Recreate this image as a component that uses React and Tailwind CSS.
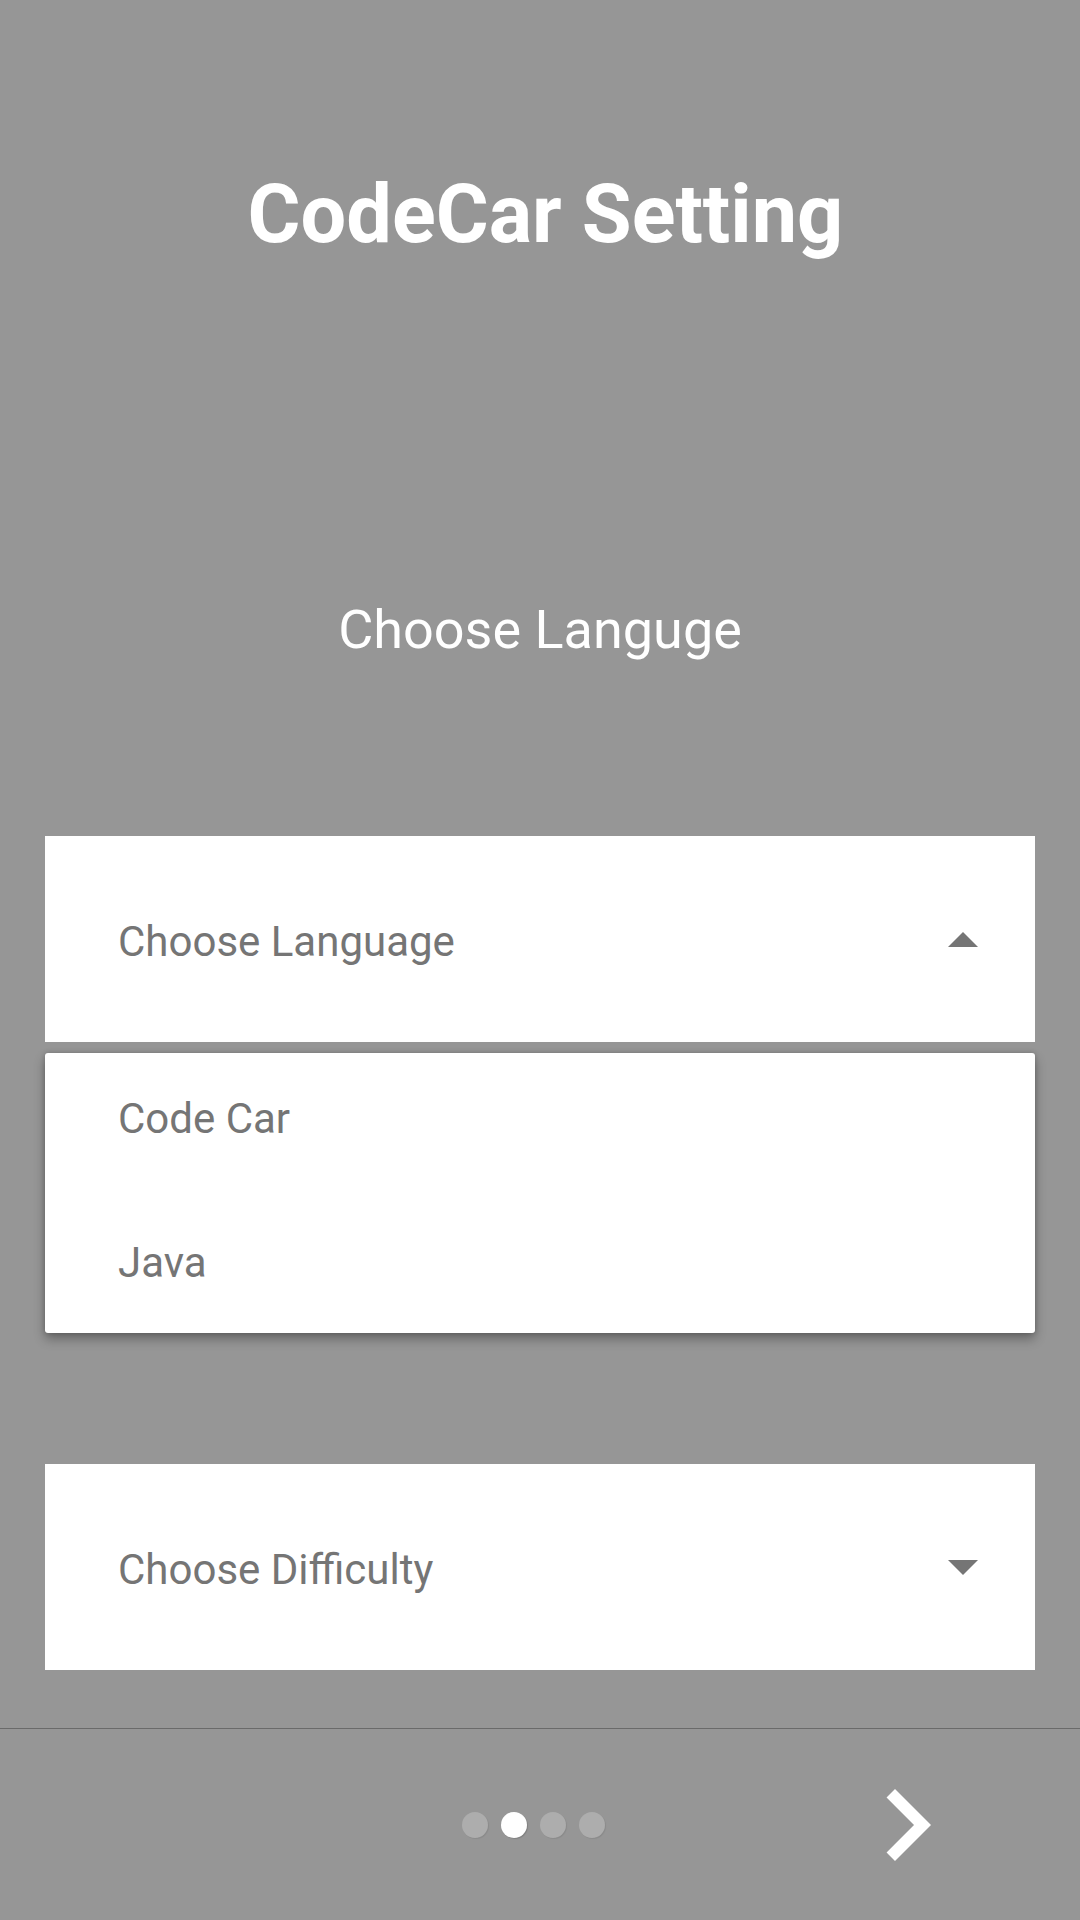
export default function App() {
  const dots = [false, true, false, false];

  return (
    <div className="w-[1080px] h-[1920px] bg-[#969696] flex flex-col font-['Roboto',sans-serif] overflow-hidden">
      {/* Header */}
      <h1 className="pt-[174px] pl-[11px] text-center text-white font-bold text-[81px] leading-none">
        CodeCar Setting
      </h1>
      <h2 className="mt-[348px] text-center text-white text-[54px] leading-none">
        Choose Languge
      </h2>

      {/* Language spinner (open) */}
      <div className="mt-[179px] mx-[45px] h-[206px] bg-white flex items-center pl-[73px] pr-[57px]">
        <span className="flex-1 pt-[5px] text-[42px] text-[#757575]">Choose Language</span>
        <svg width="30" height="15" viewBox="0 0 10 5">
          <path d="M0 5L5 0l5 5z" fill="#757575" />
        </svg>
      </div>

      <div className="mt-[11px] mx-[45px] bg-white rounded-[3px] flex flex-col gap-[14px] pb-[6px] shadow-[0_6px_12px_rgba(0,0,0,0.32),0_0_5px_rgba(0,0,0,0.18)]">
        {["Code Car", "Java"].map((item) => (
          <div key={item} className="h-[130px] flex items-center pl-[73px] text-[42px] text-[#757575]">
            {item}
          </div>
        ))}
      </div>

      {/* Difficulty spinner */}
      <div className="mt-[131px] mx-[45px] h-[206px] bg-white flex items-center pl-[73px] pr-[57px]">
        <span className="flex-1 pt-[5px] text-[42px] text-[#757575]">Choose Difficulty</span>
        <svg width="30" height="15" viewBox="0 0 10 5">
          <path d="M0 0l5 5 5-5z" fill="#757575" />
        </svg>
      </div>

      {/* Bottom bar */}
      <div className="mt-[58px] h-px bg-[#6a6a6a]" />
      <div className="flex-1 flex items-center">
        <div className="ml-[462px] flex gap-[13px]">
          {dots.map((active, i) => (
            <span
              key={i}
              className={
                active
                  ? "w-[26px] h-[26px] rounded-full bg-white shadow-[1px_1px_1px_rgba(0,0,0,0.15)]"
                  : "w-[26px] h-[26px] rounded-full bg-[#adadad] shadow-[1px_1px_1px_rgba(0,0,0,0.08)]"
              }
            />
          ))}
        </div>
        <svg className="ml-auto mr-[101px]" width="144" height="144" viewBox="0 0 24 24">
          <path d="M10 6L8.59 7.41 13.17 12l-4.58 4.59L10 18l6-6z" fill="#ffffff" />
        </svg>
      </div>
    </div>
  );
}
